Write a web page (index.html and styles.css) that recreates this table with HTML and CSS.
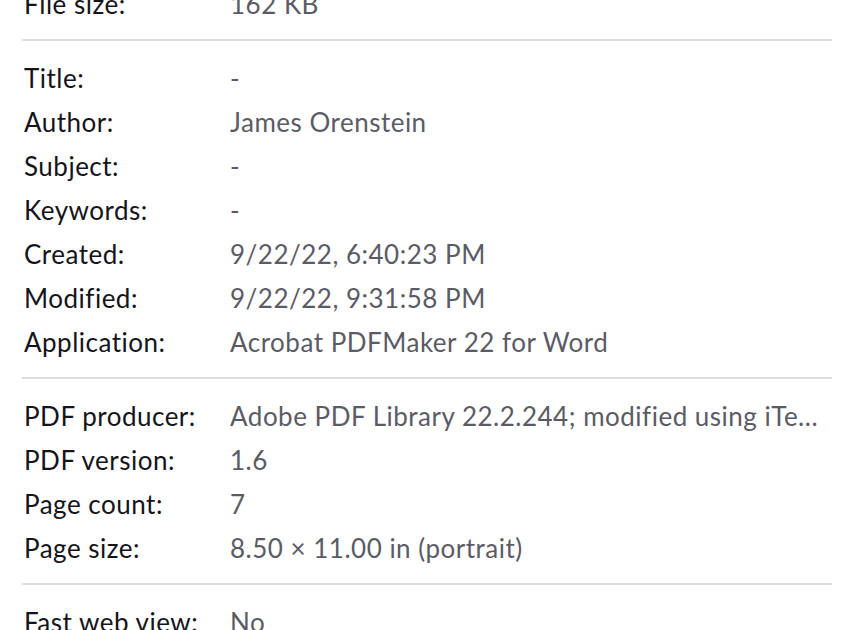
FILE: index.html
```html
<!DOCTYPE html>
<html>
<head>
<meta charset="utf-8">
<link rel="stylesheet" href="styles.css">
</head>
<body>
<div class="props">
  <dl class="group">
    <div class="row"><dt>File size:</dt><dd>162 KB</dd></div>
  </dl>
  <dl class="group">
    <div class="row"><dt>Title:</dt><dd>-</dd></div>
    <div class="row"><dt>Author:</dt><dd>James Orenstein</dd></div>
    <div class="row"><dt>Subject:</dt><dd>-</dd></div>
    <div class="row"><dt>Keywords:</dt><dd>-</dd></div>
    <div class="row"><dt>Created:</dt><dd>9/22/22, 6:40:23 PM</dd></div>
    <div class="row"><dt>Modified:</dt><dd>9/22/22, 9:31:58 PM</dd></div>
    <div class="row"><dt>Application:</dt><dd>Acrobat PDFMaker 22 for Word</dd></div>
  </dl>
  <dl class="group">
    <div class="row"><dt>PDF producer:</dt><dd class="trunc">Adobe PDF Library 22.2.244; modified using iTe...</dd></div>
    <div class="row"><dt>PDF version:</dt><dd>1.6</dd></div>
    <div class="row"><dt>Page count:</dt><dd>7</dd></div>
    <div class="row"><dt>Page size:</dt><dd>8.50 × 11.00 in (portrait)</dd></div>
  </dl>
  <dl class="group last">
    <div class="row"><dt>Fast web view:</dt><dd>No</dd></div>
  </dl>
</div>
</body>
</html>
```
FILE: styles.css
```css
html, body {
  margin: 0;
  padding: 0;
  background: #ffffff;
  overflow: hidden;
}
body {
  font-family: Lato, "Noto Sans", sans-serif;
  font-size: 26px;
  letter-spacing: 0.5px;
}
.props {
  margin-top: -19px;
  padding: 0 34px 0 22px;
}
.group {
  margin: 0;
  padding: 14px 0;
  border-bottom: 2px solid #dcdce1;
}
.group:first-child {
  padding-top: 0;
}
.group.last {
  border-bottom: none;
}
.row {
  box-sizing: border-box;
  display: grid;
  grid-template-columns: 206px minmax(0, 1fr);
  height: 44px;
  padding-top: 2px;
  align-items: center;
}
dt {
  margin: 0;
  padding-left: 2px;
  color: #15141a;
  white-space: nowrap;
}
dd {
  margin: 0;
  padding-left: 2px;
  color: #5b5b66;
  white-space: nowrap;
}
.trunc {
  overflow: hidden;
  text-overflow: ellipsis;
}
```
